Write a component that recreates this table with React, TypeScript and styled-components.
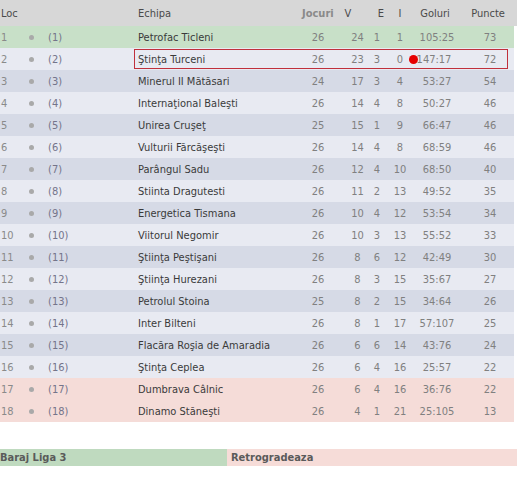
import React from "react";
import styled, { createGlobalStyle } from "styled-components";

const Global = createGlobalStyle`
  html, body { margin: 0; padding: 0; background: #fff; }
  body { font-family: "DejaVu Sans Condensed", "DejaVu Sans", sans-serif; font-size: 11px; }
`;

type Zone = "promo" | "light" | "dark" | "releg";

const zoneBg: Record<Zone, string> = {
  promo: "#c8e0c8",
  light: "#e8eaf2",
  dark: "#d6dae6",
  releg: "#f5dcd8",
};

const Page = styled.div`
  width: 517px;
  display: flex;
  flex-direction: column;
`;

const Table = styled.div`
  width: 517px;
  display: flex;
  flex-direction: column;
`;

const HeaderRow = styled.div`
  display: grid;
  grid-template-columns: 138px 164px 34px 24px 32px 16px 54px 55px;
  height: 26px;
  align-items: center;
  background: #d7d7d7;
  color: #4a4a4a;
`;

const HeadCell = styled.div<{ $align?: "left" | "center"; $pl?: number; $pr?: number; $bold?: boolean }>`
  text-align: ${(p) => p.$align ?? "center"};
  padding-left: ${(p) => p.$pl ?? 0}px;
  padding-right: ${(p) => p.$pr ?? 0}px;
  font-weight: ${(p) => (p.$bold ? "bold" : "normal")};
  color: ${(p) => (p.$bold ? "#8a8a8a" : "#4a4a4a")};
  white-space: nowrap;
`;

const Row = styled.div<{ $zone: Zone }>`
  position: relative;
  width: 514px;
  display: grid;
  grid-template-columns: 26px 10px 102px 160px 40px 32px 14px 32px 46px 52px;
  height: 22px;
  align-items: center;
  background: ${(p) => zoneBg[p.$zone]};
  color: #808080;
`;

const Pos = styled.div`
  padding-left: 1px;
  color: #8a8a8a;
`;

const Bullet = styled.span`
  justify-self: center;
  width: 5px;
  height: 5px;
  border-radius: 50%;
  background: #a9a9a9;
`;

const Prev = styled.div`
  padding-left: 12px;
  color: #74748a;
`;

const Team = styled.div`
  color: #3a3a3a;
  white-space: nowrap;
`;

const Num = styled.div<{ $pl?: number; $pr?: number }>`
  text-align: center;
  padding-left: ${(p) => p.$pl ?? 0}px;
  padding-right: ${(p) => p.$pr ?? 0}px;
  white-space: nowrap;
`;

const Goals = styled(Num)<{ $marked?: boolean }>`
  position: relative;
  padding-right: ${(p) => (p.$marked ? 10 : 4)}px;
`;

const LiveDot = styled.span`
  position: absolute;
  left: -7px;
  top: 50%;
  margin-top: -4.5px;
  width: 9px;
  height: 9px;
  border-radius: 50%;
  background: #e60000;
`;

const Highlight = styled.div`
  position: absolute;
  left: 134px;
  top: 1px;
  width: 372px;
  height: 18px;
  border: 1px solid #c0303c;
  pointer-events: none;
`;

const Spacer = styled.div`
  height: 27px;
`;

const Legend = styled.div`
  display: grid;
  grid-template-columns: 227px 1fr;
  height: 17px;
  font-weight: bold;
  color: #5a5a5a;
`;

const LegendItem = styled.div<{ $zone: Zone; $pl: number }>`
  background: ${(p) => (p.$zone === "promo" ? "#bfdabf" : "#f6dcd8")};
  padding-left: ${(p) => p.$pl}px;
  display: flex;
  align-items: center;
`;

type TeamRow = {
  pos: number;
  name: string;
  j: number;
  v: number;
  e: number;
  i: number;
  g: string;
  p: number;
};

const teams: TeamRow[] = [
  { pos: 1, name: "Petrofac Ticleni", j: 26, v: 24, e: 1, i: 1, g: "105:25", p: 73 },
  { pos: 2, name: "Ştinţa Turceni", j: 26, v: 23, e: 3, i: 0, g: "147:17", p: 72 },
  { pos: 3, name: "Minerul II Mătăsari", j: 24, v: 17, e: 3, i: 4, g: "53:27", p: 54 },
  { pos: 4, name: "Internaţional Baleşti", j: 26, v: 14, e: 4, i: 8, g: "50:27", p: 46 },
  { pos: 5, name: "Unirea Cruşeţ", j: 25, v: 15, e: 1, i: 9, g: "66:47", p: 46 },
  { pos: 6, name: "Vulturii Fărcăşeşti", j: 26, v: 14, e: 4, i: 8, g: "68:59", p: 46 },
  { pos: 7, name: "Parângul Sadu", j: 26, v: 12, e: 4, i: 10, g: "68:50", p: 40 },
  { pos: 8, name: "Stiinta Dragutesti", j: 26, v: 11, e: 2, i: 13, g: "49:52", p: 35 },
  { pos: 9, name: "Energetica Tismana", j: 26, v: 10, e: 4, i: 12, g: "53:54", p: 34 },
  { pos: 10, name: "Viitorul Negomir", j: 26, v: 10, e: 3, i: 13, g: "55:52", p: 33 },
  { pos: 11, name: "Ştiinţa Peştişani", j: 26, v: 8, e: 6, i: 12, g: "42:49", p: 30 },
  { pos: 12, name: "Ştiinţa Hurezani", j: 26, v: 8, e: 3, i: 15, g: "35:67", p: 27 },
  { pos: 13, name: "Petrolul Stoina", j: 25, v: 8, e: 2, i: 15, g: "34:64", p: 26 },
  { pos: 14, name: "Inter Bilteni", j: 26, v: 8, e: 1, i: 17, g: "57:107", p: 25 },
  { pos: 15, name: "Flacăra Roşia de Amaradia", j: 26, v: 6, e: 6, i: 14, g: "43:76", p: 24 },
  { pos: 16, name: "Ştinţa Ceplea", j: 26, v: 6, e: 4, i: 16, g: "25:57", p: 22 },
  { pos: 17, name: "Dumbrava Câlnic", j: 26, v: 6, e: 4, i: 16, g: "36:76", p: 22 },
  { pos: 18, name: "Dinamo Stăneşti", j: 26, v: 4, e: 1, i: 21, g: "25:105", p: 13 },
];

const zoneFor = (pos: number): Zone => {
  if (pos === 1) return "promo";
  if (pos >= 17) return "releg";
  return pos % 2 === 0 ? "light" : "dark";
};

export default function App() {
  return (
    <>
      <Global />
      <Page>
        <Table>
          <HeaderRow>
            <HeadCell $align="left" $pl={1}>Loc</HeadCell>
            <HeadCell $align="left">Echipa</HeadCell>
            <HeadCell $align="left" $bold>Jocuri</HeadCell>
            <HeadCell>V</HeadCell>
            <HeadCell $pl={10}>E</HeadCell>
            <HeadCell>I</HeadCell>
            <HeadCell>Goluri</HeadCell>
            <HeadCell $pr={3}>Puncte</HeadCell>
          </HeaderRow>
          {teams.map((t) => {
            const mine = t.pos === 2;
            return (
              <Row key={t.pos} $zone={zoneFor(t.pos)}>
                <Pos>{t.pos}</Pos>
                <Bullet />
                <Prev>({t.pos})</Prev>
                <Team>{t.name}</Team>
                <Num>{t.j}</Num>
                <Num $pl={7}>{t.v}</Num>
                <Num>{t.e}</Num>
                <Num>{t.i}</Num>
                <Goals $marked={mine}>
                  {mine && <LiveDot />}
                  {t.g}
                </Goals>
                <Num $pl={4}>{t.p}</Num>
                {mine && <Highlight />}
              </Row>
            );
          })}
        </Table>
        <Spacer />
        <Legend>
          <LegendItem $zone="promo" $pl={0}>Baraj Liga 3</LegendItem>
          <LegendItem $zone="releg" $pl={4}>Retrogradeaza</LegendItem>
        </Legend>
      </Page>
    </>
  );
}
